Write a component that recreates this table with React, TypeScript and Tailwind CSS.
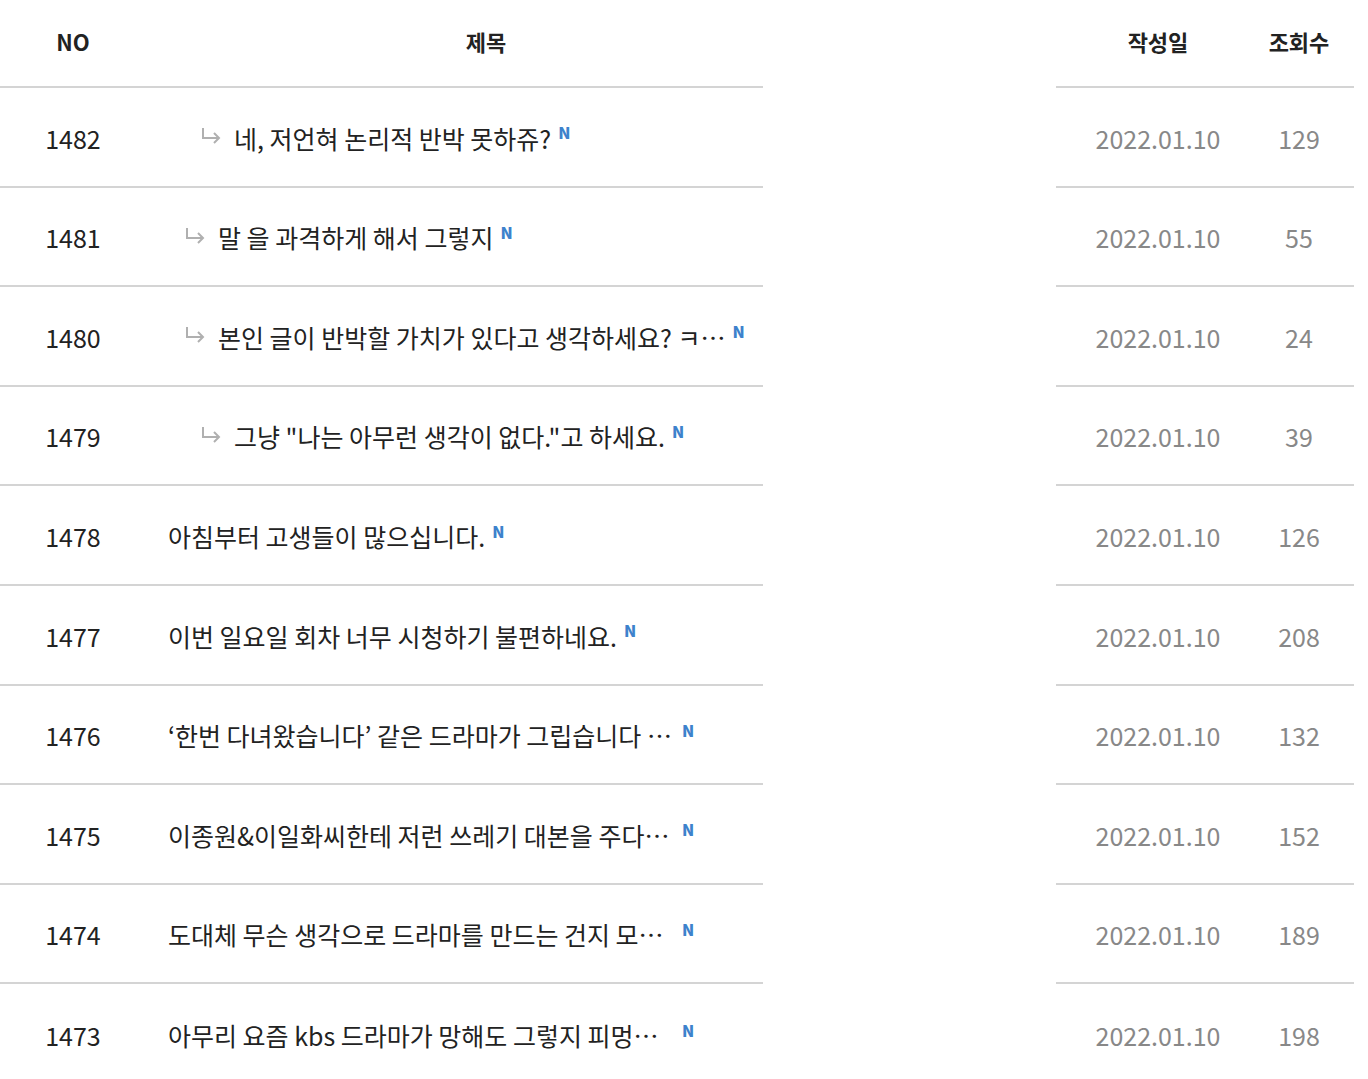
import React from "react";

type Post = {
  no: number;
  title: string;
  depth: number;
  cut?: boolean;
  date: string;
  views: number;
};

const posts: Post[] = [
  { no: 1482, title: "네, 저언혀 논리적 반박 못하쥬?", depth: 2, date: "2022.01.10", views: 129 },
  { no: 1481, title: "말 을 과격하게 해서 그렇지", depth: 1, date: "2022.01.10", views: 55 },
  { no: 1480, title: "본인 글이 반박할 가치가 있다고 생각하세요? ㅋ…", depth: 1, date: "2022.01.10", views: 24 },
  { no: 1479, title: "그냥 \"나는 아무런 생각이 없다.\"고 하세요.", depth: 2, date: "2022.01.10", views: 39 },
  { no: 1478, title: "아침부터 고생들이 많으십니다.", depth: 0, date: "2022.01.10", views: 126 },
  { no: 1477, title: "이번 일요일 회차 너무 시청하기 불편하네요.", depth: 0, date: "2022.01.10", views: 208 },
  { no: 1476, title: "‘한번 다녀왔습니다’ 같은 드라마가 그립습니다 …", depth: 0, cut: true, date: "2022.01.10", views: 132 },
  { no: 1475, title: "이종원&이일화씨한테 저런 쓰레기 대본을 주다…", depth: 0, cut: true, date: "2022.01.10", views: 152 },
  { no: 1474, title: "도대체 무슨 생각으로 드라마를 만드는 건지 모…", depth: 0, cut: true, date: "2022.01.10", views: 189 },
  { no: 1473, title: "아무리 요즘 kbs 드라마가 망해도 그렇지 피멍…", depth: 0, cut: true, date: "2022.01.10", views: 198 },
];

const font = { fontFamily: '"Noto Sans CJK KR", "Noto Sans", sans-serif' };

// reply arrow
const ReplyArrow: React.FC = () => (
  <svg width="22" height="20" viewBox="0 0 22 20" className="mr-[12px] -mt-[4px] shrink-0">
    <path d="M3 2 V12 H19" fill="none" stroke="#b0b0b0" strokeWidth="2" />
    <path d="M14 7 L19 12 L14 17" fill="none" stroke="#b0b0b0" strokeWidth="2" />
  </svg>
);

const App: React.FC = () => {
  return (
    <main className="w-[1368px] min-h-[1079px] bg-white text-[#222]" style={font}>
      <div className="grid grid-cols-[146px_617px_293px_200px_98px]">
        {/* Header */}
        <div className="h-[88px] flex items-center justify-center pb-[3px] text-[22px] font-bold border-b-2 border-[#d4d4d4]">
          NO
        </div>
        <div className="h-[88px] flex items-center justify-center pl-[63px] pb-[3px] text-[22px] font-bold border-b-2 border-[#d4d4d4]">
          제목
        </div>
        <div className="h-[88px]"></div>
        <div className="h-[88px] flex items-center justify-center pl-[4px] pb-[3px] text-[22px] font-bold border-b-2 border-[#d4d4d4]">
          작성일
        </div>
        <div className="h-[88px] flex items-center justify-center pr-[12px] pb-[3px] text-[22px] font-bold border-b-2 border-[#d4d4d4]">
          조회수
        </div>

        {/* Rows */}
        {posts.map((p, i) => {
          const last = i === posts.length - 1;
          const line = last ? "" : "border-b-2 border-[#d4d4d4]";
          return (
            <React.Fragment key={p.no}>
              <div className={`h-[99.6px] flex items-center justify-center pt-[3px] text-[25px] ${line}`}>
                {p.no}
              </div>
              <div
                className={`h-[99.6px] flex items-center pt-[3px] text-[25px] ${line} ${
                  p.depth === 2 ? "pl-[54px]" : p.depth === 1 ? "pl-[38px]" : "pl-[22px]"
                }`}
              >
                {p.depth > 0 && <ReplyArrow />}
                <span className={p.cut ? "inline-block w-[507px] whitespace-nowrap" : "whitespace-nowrap"}>
                  {p.title}
                </span>
                <span className="ml-[7px] -mt-[12px] text-[16px] leading-none font-black text-[#3d82cc]">N</span>
              </div>
              <div className="h-[99.6px]"></div>
              <div className={`h-[99.6px] flex items-center justify-center pl-[4px] pt-[3px] text-[25px] text-[#888] ${line}`}>
                {p.date}
              </div>
              <div className={`h-[99.6px] flex items-center justify-center pr-[12px] pt-[3px] text-[25px] text-[#888] ${line}`}>
                {p.views}
              </div>
            </React.Fragment>
          );
        })}
      </div>
    </main>
  );
};

export default App;
